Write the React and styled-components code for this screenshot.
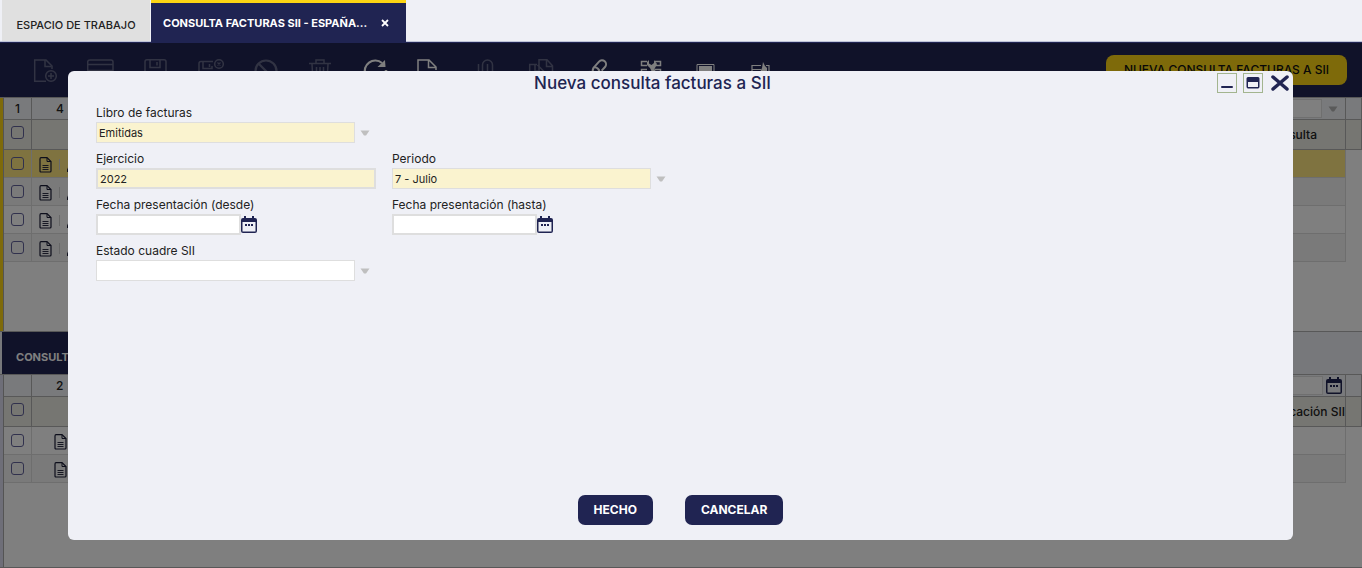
import React from "react";
import styled, { createGlobalStyle, css } from "styled-components";

const navy = "#202452";
const pale = "#eff0f6";

const GlobalStyle = createGlobalStyle`
  * { box-sizing: border-box; }
  body {
    margin: 0;
    background: ${pale};
    color: #222;
    font: 12px/16px Inter, "Open Sans", sans-serif;
  }
  button, input, select { font: inherit; color: inherit; }
`;

const Page = styled.div`
  display: flex;
  flex-direction: column;
  min-height: 100vh;
`;

const TabBar = styled.nav`
  display: flex;
  height: 42px;
  padding-left: 2px;
  border-bottom: 1px solid #bfc4d8;
`;

const TabButton = styled.button`
  width: 148px;
  padding: 8px 0 0;
  border: 0;
  margin-right: 1px;
  background: #e0e0e0;
  font-size: 11px;
  font-weight: 500;
  white-space: nowrap;
`;

const ActiveTab = styled.div`
  display: flex;
  align-items: center;
  gap: 14px;
  width: 255px;
  height: 42px;
  padding: 0 12px;
  border-top: 3px solid #fcd514;
  background: ${navy};
  color: #fff;
`;

const ActiveTabTitle = styled.button`
  min-width: 0;
  padding: 0;
  border: 0;
  background: none;
  font-size: 11px;
  font-weight: 700;
  white-space: nowrap;
`;

const TabClose = styled.button`
  display: flex;
  padding: 0;
  border: 0;
  background: none;
`;

const Workspace = styled.main`
  position: relative;
  display: flex;
  flex: 1;
  flex-direction: column;
  border-top: 1px solid ${navy};
`;

const Toolbar = styled.div`
  display: flex;
  align-items: center;
  gap: 28px;
  height: 54px;
  padding: 0 15px 0 32px;
  background: ${navy};
`;

const ToolButton = styled.button`
  display: flex;
  flex: none;
  width: 27px;
  padding: 0;
  border: 0;
  background: none;
  color: #fff;
  opacity: ${(p) => (p.disabled ? 0.3 : 1)};
`;

const ToolbarAction = styled.button`
  height: 30px;
  width: 241px;
  margin-left: auto;
  padding: 0;
  border: 0;
  border-radius: 8px;
  background: #fcd514;
  color: #111;
  font-weight: 500;
  white-space: nowrap;
`;

const Panel = styled.section`
  flex: ${(p) => (p.$grow ? "1" : "none")};
  min-height: ${(p) => (p.$grow ? "193px" : "235px")};
  border: solid #b0b0b0;
  border-width: ${(p) => (p.$grow ? "0 0 1px" : "1px 0")};
  background: #fff;
  display: flex;
`;

const PanelEdge = styled.div`
  flex: none;
  width: 4px;
  border-right: 1px solid #a8a8a8;
  background: ${(p) => p.$color};
`;

const Table = styled.table`
  flex: 1;
  align-self: flex-start;
  table-layout: fixed;
  border-spacing: 0;
  width: 100%;
`;

const Col = styled.col`
  width: ${(p) => (p.$width ? `${p.$width}px` : "auto")};
`;

const cell = css`
  padding: 0;
  border: solid #dcdcdc;
  border-width: 0 1px 1px 0;
  font-weight: 500;
  text-align: left;
`;

const FilterCell = styled.th`
  ${cell}
  height: 22px;
  border-color: #b0b0b0;
  background: #f3f5f9;
  padding-left: ${(p) => p.$indent || 0}px;
  text-align: ${(p) => (p.$center ? "center" : "left")};
`;

const HeadCell = styled.th`
  ${cell}
  height: 30px;
  padding-right: ${(p) => p.$right || 0}px;
  padding-bottom: ${(p) => p.$bottom || 0}px;
  border-color: #b0b0b0;
  background: #ecece4;
  text-align: right;
  white-space: nowrap;
`;

const BodyRow = styled.tr`
  background: ${(p) => (p.$selected ? "#ffe680" : p.$alt ? "#f4f4f4" : "#fff")};
`;

const BodyCell = styled.td`
  ${cell}
  height: 28px;
`;

const Gutter = styled.td`
  padding: 0;
  background: #fff;
`;

const Check = styled.input.attrs({ type: "checkbox" })`
  appearance: none;
  display: block;
  width: 13px;
  height: 13px;
  margin: 0 auto;
  border: 1px solid #62629a;
  border-radius: 3px;
`;

const RowTools = styled.div`
  display: flex;
  align-items: center;
  gap: 7px;
  padding: 2px 0 0 ${(p) => p.$indent}px;
  color: #1a1c36;
`;

const Separator = styled.span`
  width: 1px;
  height: 11px;
  background: #d2d2d2;
`;

const FilterField = styled.div`
  display: flex;
  align-items: center;
  gap: ${(p) => p.$gap}px;
  padding-right: ${(p) => p.$end}px;
  color: ${navy};
`;

const FilterInput = styled.input`
  flex: 1;
  min-width: 0;
  height: 19px;
  border: 1px solid #dedede;
  background: #fff;
`;

const DetailBar = styled.div`
  display: flex;
  height: 43px;
  padding-left: 2px;
  border-bottom: 1px solid #b0b0b0;
  background: ${pale};
`;

const DetailTab = styled.button`
  width: 240px;
  padding: 8px 14px 0;
  border: 0;
  background: ${navy};
  color: #fff;
  font-weight: 700;
  font-size: 11px;
  text-align: left;
  white-space: nowrap;
`;

const Overlay = styled.div`
  position: absolute;
  inset: 0;
  display: flex;
  padding: 28px 69px 28px 68px;
  background: rgba(0, 0, 0, 0.5);
`;

const Dialog = styled.div`
  display: flex;
  flex: 1;
  flex-direction: column;
  border-radius: 6px;
  background: ${pale};
`;

const DialogHeader = styled.header`
  display: flex;
  height: 24px;
  padding-left: 20px;
`;

const DialogTitle = styled.h1`
  flex: 1;
  margin: 0;
  color: ${navy};
  font-size: 17px;
  font-weight: 500;
  line-height: 24px;
  text-align: center;
`;

const WindowControls = styled.div`
  display: flex;
  gap: 6px;
  padding: 2px 2px 0 0;
`;

const WindowButton = styled.button`
  display: flex;
  align-items: center;
  justify-content: center;
  width: ${(p) => (p.$plain ? "22px" : "20px")};
  height: 20px;
  padding: 0;
  border: ${(p) => (p.$plain ? "0" : "1px solid #a3b58f")};
  background: none;
  color: ${navy};
`;

const Form = styled.form`
  display: flex;
  flex: 1;
  flex-direction: column;
  padding: 10px 28px 15px;
`;

const Fields = styled.div`
  display: grid;
  grid-template-columns: 280px 280px;
  gap: 8px 16px;
`;

const Field = styled.div`
  grid-column-start: ${(p) => p.$column || 1};
`;

const Label = styled.label`
  display: block;
  height: 17px;
  white-space: nowrap;
`;

const Control = styled.div`
  display: flex;
  align-items: center;
  gap: ${(p) => p.$gap || 0}px;
  color: ${(p) => p.$color || "#bfbfbf"};
`;

const Select = styled.select`
  appearance: none;
  width: 259px;
  height: 21px;
  padding: 0 2px;
  border: 1px solid #dedede;
  border-radius: 0;
  background: ${(p) => (p.required ? "#faf3cf" : "#fff")};
  color: #222;
  font-size: 11px;
  font-weight: 400;
`;

const TextInput = styled.input`
  width: ${(p) => p.$width}px;
  height: 21px;
  padding: 0 2px;
  border: 2px solid #dedede;
  background: ${(p) => (p.required ? "#faf3cf" : "#fff")};
  color: #222;
  font-size: 11px;
  font-weight: 400;
`;

const IconButton = styled.button`
  display: flex;
  padding: 0;
  border: 0;
  background: none;
`;

const Actions = styled.footer`
  display: flex;
  justify-content: center;
  gap: 32px;
  margin-top: auto;
`;

const ActionButton = styled.button`
  height: 30px;
  padding: 0 16px;
  border: 0;
  border-radius: 7px;
  background: ${navy};
  color: #fff;
  font-weight: 700;
`;

const Arrow = () => (
  <svg width="10" height="6" viewBox="0 0 10 6" aria-hidden="true">
    <path d="M0.5 0.5h9L6 5.5H4Z" fill="currentColor" />
  </svg>
);

const Calendar = () => (
  <svg width="16" height="18" viewBox="0 0 16 18" aria-hidden="true">
    <path d="M3 0h2v2h6V0h2v2h1q2 0 2 2v11q0 2-2 2H2q-2 0-2-2V4q0-2 2-2h1ZM1.500 6v9.500h13V6Z" fill="currentColor" fillRule="evenodd" />
    <path d="M4 8h2v2H4ZM7 8h2v2H7ZM10 8h2v2h-2Z" fill="currentColor" />
  </svg>
);

const DocIcon = () => (
  <svg width="13" height="16" viewBox="0 0 13 16" fill="none" stroke="currentColor" aria-hidden="true">
    <path d="M2 .6h6l4 4V14q0 1-1 1H2q-1 0-1-1V2Q1 .6 2 .6Z" strokeWidth="1.200" />
    <path d="M8 1v3.500h4" />
    <path d="M3.500 8.500h6M3.500 10.500h6M3.500 12.500h6" strokeWidth=".9" />
  </svg>
);

const PencilIcon = () => (
  <svg width="14" height="14" viewBox="0 0 14 14" fill="none" stroke="currentColor" aria-hidden="true">
    <path d="M0 13.500 2 9l8-8 3 3-8 8Z" strokeWidth="1.400" />
  </svg>
);

const tools = [
  { label: "Nuevo", disabled: true, art: <><path d="M20 12V9l-6-6H2.700v21.300H14" /><path d="M13 3v6.500h6.500" /><circle cx="19" cy="19" r="5.300" /><path d="M16 19h6M19 16v6" /></> },
  { label: "Nuevo en formulario", disabled: true, art: <><path d="M15 21H3q-2.300 0-2.300-2V5q0-2 2.300-2h21q2 0 2 2v9" /><path d="M1 7.500h25M1 13.500h25" /></> },
  { label: "Guardar", disabled: true, art: <path d="M5 2.700h17q2 0 2 2V23H3V4.700q0-2 2-2ZM8 3v7.500h10V3M15 5v3.500M7 23v-7h13v7" /> },
  { label: "Guardar y cerrar", disabled: true, art: <><path d="M16 4.500H4q-2 0-2 2V23h18V14M6 5v6.500h9V9M12.500 7v3M6 23v-6h11v6" /><circle cx="22" cy="7" r="4.300" /><path d="m20.500 5.500 3 3m0-3-3 3" strokeWidth="1.200" /></> },
  { label: "Deshacer", disabled: true, art: <g strokeWidth="2.200"><circle cx="14" cy="14" r="10.500" /><path d="m6.500 6.500 15 15" /></g> },
  { label: "Eliminar", disabled: true, art: <path d="M2 6.500h22M9 6V3h8v3M5 7l1 18h14l1-18M9.500 10v11M13 10v11M16.500 10v11" /> },
  { label: "Refrescar", art: <><path d="M3.500 18A10.500 10.500 0 0 1 20 6" strokeWidth="2.200" /><path d="m23 3 .500 7h-8Z" fill="currentColor" stroke="none" /><path d="M24 13v3" strokeWidth="2.500" /></> },
  { label: "Exportar", art: <><path d="M18 20v4H1V3h11l7 7v3M11.500 3v7.500H19" /><path d="M22 14.500v3" /></> },
  { label: "Adjuntar", disabled: true, art: <path d="M6.500 7v11a7 7 0 0 0 14 0V8a5 5 0 0 0-10 0v10a2.500 2.500 0 0 0 5 0V7" /> },
  { label: "Copiar registro", disabled: true, art: <><path d="M10 7.500H2.700V23H15v-3M8 8v6h5" /><path d="M12 16V2.700h8l5.500 6V20H15M19.500 3v6.500h6M10.500 8l7 7" /></> },
  { label: "Enlazar", art: <g transform="rotate(-48 14 14)" strokeWidth="2"><path d="M13 18q-2-1-2-4t3.500-4H23a4 4 0 0 1 0 8h-5" /><path d="M15 10q2 1 2 4t-3.500 4H5a4 4 0 0 1 0-8h5" /></g> },
  { label: "Procesos", art: <><path d="M10 4.500H4.500v4H10M10 12.500H4.500v4H10M18 4.500h5.500v4H18M18 12.500h5.500v4H18" /><path d="M12 3v3.500l2.500 1.500L17 6V3l3 4-2.500 5 4 8h-4L13 11l-3-3V5Z" fill="currentColor" stroke="none" /></> },
  { label: "Vista formulario", art: <><path d="M5 7.500h17v15H5Z" strokeWidth="1" /><path d="M7 9h13v5H7Z" fill="currentColor" stroke="none" /></> },
  { label: "Personalizar", art: <><path d="M14 8.500H5v14h17v-14h-3M5 12.500h9" strokeWidth="1.200" /><path d="m16 5 2 4 2 2v6h-8l3-6Z" fill="currentColor" stroke="none" /></> },
];

const masterRows = [1, 2, 3, 4];
const detailRows = [1, 2];

function GridColumns({ last }) {
  return (
    <colgroup>
      <Col $width={28} />
      <Col $width={70} />
      <Col />
      <Col $width={last} />
      <Col $width={16} />
    </colgroup>
  );
}

function Grid({ name, first, count, title, titleEnd, rows, indent, filter, selectable, last }) {
  return (
    <Table aria-label={name}>
      <GridColumns last={last} />
      <thead>
        <tr>
          <FilterCell $center>{first}</FilterCell>
          <FilterCell $indent={24}>{count}</FilterCell>
          <FilterCell />
          <FilterCell>{filter}</FilterCell>
          <FilterCell />
        </tr>
        <tr>
          <HeadCell $bottom={4}><Check aria-label="Seleccionar todo" /></HeadCell>
          <HeadCell />
          <HeadCell />
          <HeadCell $right={titleEnd}>{title}</HeadCell>
          <HeadCell />
        </tr>
      </thead>
      <tbody>
        {rows.map((row, i) => (
          <BodyRow key={row} $selected={selectable && i === 0} $alt={i % 2 === 1}>
            <BodyCell><Check aria-label={`Seleccionar fila ${row}`} /></BodyCell>
            <BodyCell>
              <RowTools $indent={indent}>
                <DocIcon />
                {selectable && <><Separator /><PencilIcon /></>}
              </RowTools>
            </BodyCell>
            <BodyCell />
            <BodyCell />
            <Gutter />
          </BodyRow>
        ))}
      </tbody>
    </Table>
  );
}

function SelectField({ id, label, value, column, required }) {
  return (
    <Field $column={column}>
      <Label htmlFor={id}>{label}</Label>
      <Control $gap={5}>
        <Select id={id} required={required} defaultValue={value}>
          <option value={value}>{value}</option>
        </Select>
        <Arrow />
      </Control>
    </Field>
  );
}

function DateField({ id, label, column }) {
  return (
    <Field $column={column}>
      <Label htmlFor={id}>{label}</Label>
      <Control $color={navy}>
        <TextInput id={id} $width={145} />
        <IconButton type="button" aria-label={`Calendario: ${label}`}><Calendar /></IconButton>
      </Control>
    </Field>
  );
}

export default function App() {
  return (
    <Page>
      <GlobalStyle />
      <TabBar>
        <TabButton>ESPACIO DE TRABAJO</TabButton>
        <ActiveTab>
          <ActiveTabTitle>CONSULTA FACTURAS SII - ESPAÑA...</ActiveTabTitle>
          <TabClose aria-label="Cerrar pestaña">
            <svg width="8" height="8" viewBox="0 0 8 8" stroke="currentColor" strokeWidth="1.800"><path d="m1 1 6 6M7 1 1 7" /></svg>
          </TabClose>
        </ActiveTab>
      </TabBar>
      <Workspace>
        <Toolbar>
          {tools.map((tool) => (
            <ToolButton key={tool.label} aria-label={tool.label} disabled={tool.disabled}>
              <svg width="27" height="27" viewBox="0 0 27 27" fill="none" stroke="currentColor" strokeWidth="1.500">{tool.art}</svg>
            </ToolButton>
          ))}
          <ToolbarAction>NUEVA CONSULTA FACTURAS A SII</ToolbarAction>
        </Toolbar>
        <Panel>
          <PanelEdge $color="#fcd514" />
          <Grid
            name="Consultas"
            first="1"
            count="4"
            title="Consulta"
            titleEnd={28}
            rows={masterRows}
            indent={7}
            last={120}
            selectable
            filter={<FilterField $gap={6} $end={7}><FilterInput aria-label="Filtro consulta" /><Control $color="#b4b4b4"><Arrow /></Control></FilterField>}
          />
        </Panel>
        <DetailBar>
          <DetailTab>CONSULTA FACTURAS</DetailTab>
        </DetailBar>
        <Panel $grow>
          <PanelEdge $color="#dcdcf0" />
          <Grid
            name="Facturas"
            count="2"
            title="Comunicación SII"
            titleEnd={0}
            rows={detailRows}
            indent={22}
            last={120}
            filter={<FilterField $gap={3} $end={3}><FilterInput aria-label="Filtro fecha" /><Calendar /></FilterField>}
          />
        </Panel>
        <Overlay>
          <Dialog role="dialog" aria-labelledby="dialog-title">
            <DialogHeader>
              <DialogTitle id="dialog-title">Nueva consulta facturas a SII</DialogTitle>
              <WindowControls>
                <WindowButton aria-label="Minimizar">
                  <svg width="14" height="14" viewBox="0 0 14 14"><rect x="1" y="10" width="12" height="2" rx="1" fill="currentColor" /></svg>
                </WindowButton>
                <WindowButton aria-label="Maximizar">
                  <svg width="14" height="12" viewBox="0 0 14 12"><path d="M2 0h10q1.500 0 1.500 1.500v8q0 2-1.500 2H2Q.5 11.500.5 9.500v-8Q.5 0 2 0Zm0 5v5h10V5Z" fill="currentColor" fillRule="evenodd" /></svg>
                </WindowButton>
                <WindowButton $plain aria-label="Cerrar">
                  <svg width="18" height="16" viewBox="0 0 18 16" stroke="currentColor" strokeWidth="3.500" strokeLinecap="round"><path d="m2 2 14 12M16 2 2 14" /></svg>
                </WindowButton>
              </WindowControls>
            </DialogHeader>
            <Form onSubmit={(e) => e.preventDefault()}>
              <Fields>
                <SelectField id="libro" label="Libro de facturas" value="Emitidas" required />
                <Field>
                  <Label htmlFor="ejercicio">Ejercicio</Label>
                  <Control>
                    <TextInput id="ejercicio" $width={280} defaultValue="2022" required />
                  </Control>
                </Field>
                <SelectField id="periodo" label="Periodo" value="7 - Julio" column={2} required />
                <DateField id="desde" label="Fecha presentación (desde)" />
                <DateField id="hasta" label="Fecha presentación (hasta)" column={2} />
                <SelectField id="estado" label="Estado cuadre SII" value="" />
              </Fields>
              <Actions>
                <ActionButton type="submit">HECHO</ActionButton>
                <ActionButton type="button">CANCELAR</ActionButton>
              </Actions>
            </Form>
          </Dialog>
        </Overlay>
      </Workspace>
    </Page>
  );
}
